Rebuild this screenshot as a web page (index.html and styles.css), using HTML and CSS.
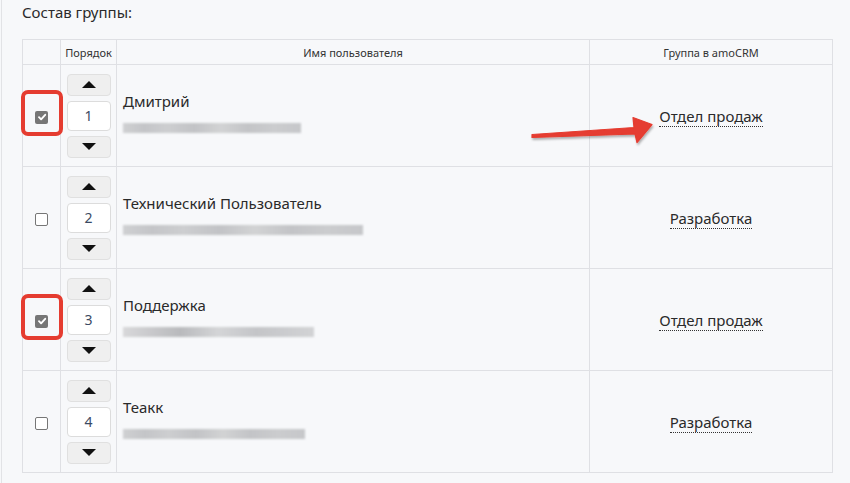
FILE: index.html
```html
<!DOCTYPE html>
<html lang="ru">
<head>
<meta charset="utf-8">
<title>Состав группы</title>
<link rel="stylesheet" href="styles.css">
</head>
<body>
<div class="page">
  <h2 class="title">Состав группы:</h2>
  <div class="table-wrap">
    <table class="members">
      <colgroup>
        <col class="c-check"><col class="c-order"><col class="c-name"><col class="c-group">
      </colgroup>
      <thead>
        <tr>
          <th></th>
          <th>Порядок</th>
          <th>Имя пользователя</th>
          <th>Группа в amoCRM</th>
        </tr>
      </thead>
      <tbody>
        <tr>
          <td class="check-cell">
            <span class="box checked"><svg viewBox="0 0 12 12" width="12" height="12"><path d="M3 6.2 L5.1 8.3 L9.2 3.8" fill="none" stroke="#fff" stroke-width="1.9" stroke-linecap="round" stroke-linejoin="round"/></svg></span>
            <span class="mark"></span>
          </td>
          <td class="order-cell">
            <div class="stepper">
              <button class="step"><span class="tri up"></span></button>
              <div class="num">1</div>
              <button class="step"><span class="tri down"></span></button>
            </div>
          </td>
          <td class="name-cell">
            <div class="user">
              <div class="name">Дмитрий</div>
              <div class="mail" style="width:178px"></div>
            </div>
          </td>
          <td class="group-cell"><span class="group">Отдел продаж</span></td>
        </tr>
        <tr>
          <td class="check-cell"><span class="box"></span></td>
          <td class="order-cell">
            <div class="stepper">
              <button class="step"><span class="tri up"></span></button>
              <div class="num">2</div>
              <button class="step"><span class="tri down"></span></button>
            </div>
          </td>
          <td class="name-cell">
            <div class="user">
              <div class="name">Технический Пользователь</div>
              <div class="mail" style="width:240px"></div>
            </div>
          </td>
          <td class="group-cell"><span class="group">Разработка</span></td>
        </tr>
        <tr>
          <td class="check-cell">
            <span class="box checked"><svg viewBox="0 0 12 12" width="12" height="12"><path d="M3 6.2 L5.1 8.3 L9.2 3.8" fill="none" stroke="#fff" stroke-width="1.9" stroke-linecap="round" stroke-linejoin="round"/></svg></span>
            <span class="mark"></span>
          </td>
          <td class="order-cell">
            <div class="stepper">
              <button class="step"><span class="tri up"></span></button>
              <div class="num">3</div>
              <button class="step"><span class="tri down"></span></button>
            </div>
          </td>
          <td class="name-cell">
            <div class="user">
              <div class="name">Поддержка</div>
              <div class="mail light" style="width:191px"></div>
            </div>
          </td>
          <td class="group-cell"><span class="group">Отдел продаж</span></td>
        </tr>
        <tr>
          <td class="check-cell"><span class="box"></span></td>
          <td class="order-cell">
            <div class="stepper">
              <button class="step"><span class="tri up"></span></button>
              <div class="num">4</div>
              <button class="step"><span class="tri down"></span></button>
            </div>
          </td>
          <td class="name-cell">
            <div class="user">
              <div class="name">Теакк</div>
              <div class="mail" style="width:182px"></div>
            </div>
          </td>
          <td class="group-cell"><span class="group">Разработка</span></td>
        </tr>
      </tbody>
    </table>
    <svg class="arrow" width="140" height="40" viewBox="0 0 140 40">
      <defs>
        <filter id="sh" x="-10%" y="-30%" width="130%" height="180%">
          <feDropShadow dx="1" dy="2" stdDeviation="1.2" flood-color="#000" flood-opacity="0.3"/>
        </filter>
      </defs>
      <path d="M2 26.5 L104 19.5 L103 9.5 L122 16.5 L107 34.5 L105 26 L2 29.5 Z" fill="#e53c30" filter="url(#sh)" stroke="#e53c30" stroke-width="1.2" stroke-linejoin="round"/>
    </svg>
  </div>
</div>
</body>
</html>
```

FILE: styles.css
```css
html, body {
  margin: 0;
  padding: 0;
  background: #f7f8fa;
}

body {
  font-family: "Noto Sans", "Open Sans", "DejaVu Sans", sans-serif;
  color: #222;
}

.page {
  margin-left: 1px;
  border-left: 1px solid #e2e3e6;
  min-height: 483px;
  padding: 0 0 0 20px;
  box-sizing: border-box;
}

.title {
  margin: 0;
  padding-top: 1px;
  font-size: 15px;
  font-weight: normal;
  line-height: 22px;
  color: #2a2a2a;
}

.table-wrap {
  position: relative;
  margin-top: 16px;
  width: 811px;
}

.members {
  border-collapse: collapse;
  width: 811px;
  table-layout: fixed;
}

.members th,
.members td {
  border: 1px solid #dfe0e4;
  padding: 0;
}

.c-check { width: 38px; }
.c-order { width: 56px; }
.c-name { width: 473px; }
.c-group { width: 243px; }

.members th {
  height: 24px;
  font-size: 11px;
  font-weight: normal;
  color: #333;
  text-align: center;
  vertical-align: middle;
}

.members td {
  height: 101px;
  vertical-align: middle;
}

.check-cell {
  position: relative;
  text-align: center;
}

.box {
  display: inline-flex;
  align-items: center;
  justify-content: center;
  width: 11px;
  height: 11px;
  border: 1px solid #767676;
  border-radius: 2px;
  background: #fff;
  vertical-align: middle;
}

.box.checked {
  width: 13px;
  height: 13px;
  border: none;
  background: #767676;
}

.box svg {
  display: block;
}

/* highlight frame drawn around the selected checkboxes */
.mark {
  position: absolute;
  left: -2px;
  top: 25px;
  width: 34px;
  height: 38px;
  border: 4px solid #e53c30;
  border-radius: 7px;
}

.order-cell {
  padding: 0 6px;
}

.stepper {
  display: flex;
  flex-direction: column;
  gap: 5px;
  width: 44px;
  margin: 0 auto;
}

.step {
  display: flex;
  align-items: center;
  justify-content: center;
  width: 44px;
  height: 22px;
  padding: 0;
  background: #efefef;
  border: 1px solid #e0e0e0;
  border-radius: 4px;
}

.tri {
  width: 0;
  height: 0;
  border-left: 7px solid transparent;
  border-right: 7px solid transparent;
}

.tri.up { border-bottom: 7px solid #111; }
.tri.down { border-top: 7px solid #111; }

.num {
  height: 28px;
  border: 1px solid #dcdcdc;
  border-radius: 4px;
  background: #fff;
  font-size: 14px;
  line-height: 28px;
  text-align: center;
  color: #3b4a63;
}

.members td.name-cell {
  padding-left: 6px;
}

.user {
  padding-bottom: 7px;
}

.name {
  font-size: 15px;
  line-height: 20px;
  color: #2a2a2a;
}

.mail {
  height: 10px;
  margin-top: 12px;
  background: linear-gradient(90deg, #cfd0d2 0%, #c4c5c8 12%, #cdced0 25%, #c2c3c6 40%, #d2d3d4 55%, #c3c4c7 70%, #cbccce 85%, #c6c7ca 100%);
  filter: blur(0.8px);
}

.mail.light {
  background: linear-gradient(90deg, #d8d8da 0%, #b9babd 30%, #d4d5d7 50%, #c4c5c8 70%, #d2d3d5 100%);
}

.group-cell {
  text-align: center;
}

.group {
  font-size: 15px;
  line-height: 20px;
  color: #2a2a2a;
  border-bottom: 1px dotted #333;
}

.arrow {
  position: absolute;
  left: 508px;
  top: 69px;
}
```
